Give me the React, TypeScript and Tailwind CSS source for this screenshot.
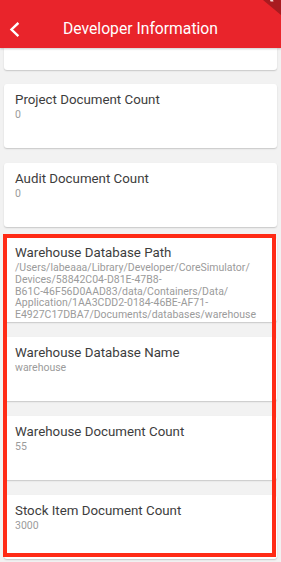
import React from "react";

type Info = {
  label: string;
  value: string[];
  height: string;
};

const items: Info[] = [
  { label: "Project Document Count", value: ["0"], height: "h-[64px]" },
  { label: "Audit Document Count", value: ["0"], height: "h-[64px]" },
  {
    label: "Warehouse Database Path",
    value: [
      "/Users/labeaaa/Library/Developer/CoreSimulator/",
      "Devices/58842C04-D81E-47B8-",
      "B61C-46F56D0AAD83/data/Containers/Data/",
      "Application/1AA3CDD2-0184-46BE-AF71-",
      "E4927C17DBA7/Documents/databases/warehouse",
    ],
    height: "h-[85px]",
  },
  { label: "Warehouse Database Name", value: ["warehouse"], height: "h-[64px]" },
  { label: "Warehouse Document Count", value: ["55"], height: "h-[64px]" },
  { label: "Stock Item Document Count", value: ["3000"], height: "h-[64px]" },
];

function InfoCard({ item, className }: { item: Info; className?: string }) {
  return (
    <div
      className={`${item.height} ${className ?? ""} shrink-0 rounded-[3px] bg-white px-[11px] pt-[8px] shadow-[0_1px_1.5px_rgba(0,0,0,0.18)]`}
    >
      <p className="text-[13.3px] leading-[16px] text-[#3d3d3d]">{item.label}</p>
      <div className="mt-[1px] text-[10.5px] leading-[11.8px] text-[#9b9b9b]">
        {item.value.map((line) => (
          <div key={line} className="whitespace-nowrap">
            {line}
          </div>
        ))}
      </div>
    </div>
  );
}

export default function App() {
  return (
    <div
      className="relative h-[562px] w-[281px] overflow-hidden bg-[#f2f2f2]"
      style={{ fontFamily: "Roboto, 'Noto Sans', sans-serif" }}
    >
      {/* app bar */}
      <header className="relative z-10 flex h-[48px] items-center bg-[#e9242b] pt-[10px] shadow-[0_1px_2px_rgba(0,0,0,0.2)]">
        <svg
          className="ml-[9px] h-[15px] w-[11px]"
          viewBox="0 0 11 15"
          fill="none"
          stroke="white"
          strokeWidth="2.4"
          strokeLinecap="square"
        >
          <polyline points="8.5,1.8 2.5,7.5 8.5,13.2" />
        </svg>
        <h1 className="flex-1 pr-[20px] text-center text-[15.7px] leading-none text-white">
          Developer Information
        </h1>
        <svg className="absolute right-0 top-0 h-[15px] w-[18px]" viewBox="0 0 18 15">
          <polygon points="0,0 18,0 18,15" fill="#a81b20" />
          <polygon points="7,0 10,0 10.6,1.4 7.6,1.4" fill="#f3d6d6" />
        </svg>
      </header>

      {/* list */}
      <div className="mx-[4px] flex flex-col">
        <div className="h-[22px] shrink-0 rounded-b-[3px] bg-white shadow-[0_1px_1.5px_rgba(0,0,0,0.18)]" />
        <InfoCard item={items[0]} className="mt-[14px]" />
        <InfoCard item={items[1]} className="mt-[15px]" />
        <InfoCard item={items[2]} className="mt-[10px]" />
        <InfoCard item={items[3]} className="mt-[15px]" />
        <InfoCard item={items[4]} className="mt-[15px]" />
        <InfoCard item={items[5]} className="mt-[15px]" />
      </div>

      {/* highlight annotation */}
      <div className="pointer-events-none absolute left-[3px] top-[234px] h-[323px] w-[273px] border-[4px] border-[#ff2b16]" />
    </div>
  );
}
